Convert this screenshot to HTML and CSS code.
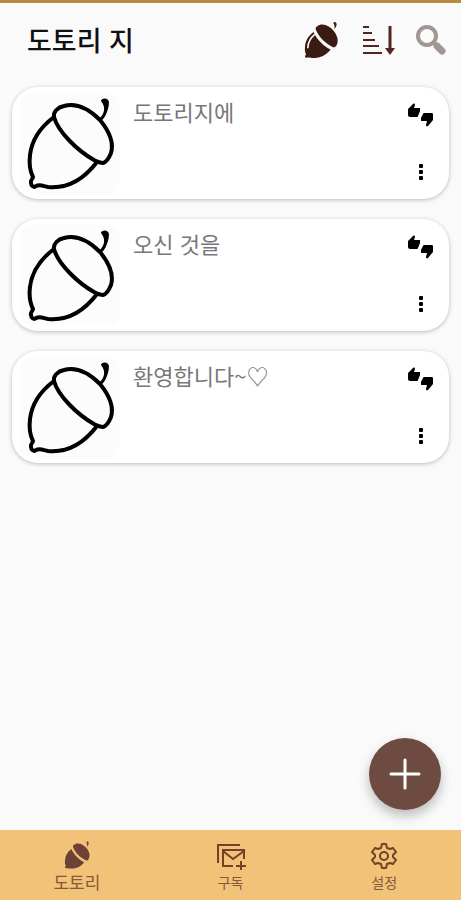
FILE: index.html
```html
<!DOCTYPE html>
<html lang="ko">
<head>
  <meta charset="UTF-8">
  <meta name="viewport" content="width=device-width, initial-scale=1.0">
  <title>도토리 지</title>
  <link rel="stylesheet" href="styles.css">
</head>
<body>
  <!-- shared icons -->
  <svg class="defs" aria-hidden="true">
    <symbol id="acorn" viewBox="0 0 100 100">
      <g fill="none" stroke="#000" stroke-width="4" stroke-linecap="round" stroke-linejoin="round">
        <path d="M34 24C22 33 12 45 10 62C9 70 10 78 13 84C13 86 10 87 11 90C11 93 14 95 16 93C20 91 23 93 28 94C49 96 64 86 77 69"/>
        <path d="M34 24C33 19 38 14 44 13C58 9 71 18 80 27C89 38 94 50 91 60C89 65 87 69 83 70C80 70 78 69 74 67C58 58 38 39 34 24Z"/>
        <path d="M80 27C85 23 86 18 86 13" stroke-width="3"/>
      </g>
      <path d="M81 8C81 5 88 4 89 9C89 15 87 20 83 25C85 18 85 13 81 8Z"/>
    </symbol>
    <symbol id="acorn-solid" viewBox="0 0 100 100">
      <path d="M31 30C17 41 10 55 10 68C9 76 10 81 13 86C8 90 10 96 16 94C22 93 27 96 34 95C51 95 65 86 74 74C57 66 41 50 31 30Z"/>
      <path d="M40 16C52 6 70 13 81 26C91 38 95 52 89 63C86 68 82 70 78 67C60 58 44 42 37 24C36 20 37 18 40 16Z"/>
      <path class="stem" d="M81 8C81 3 89 5 89 10C89 15 87 19 83 23C85 17 84 12 81 8Z"/>
    </symbol>
    <symbol id="thumbs" viewBox="0 0 28 26">
      <path d="M1 7L6 2C7 1 8 2 8 3L7 6H13V9L11 14C11 15 10 15 9 15H3C2 15 1 14 1 13Z"/>
      <path d="M26 18L21 24C20 25 19 24 19 23L20 19H14V16L16 12C16 11 17 11 18 11H25C26 11 26 12 26 13Z"/>
    </symbol>
    <symbol id="more" viewBox="0 0 24 24">
      <rect x="10" y="4" width="4" height="4" rx="1"/>
      <rect x="10" y="10" width="4" height="4" rx="1"/>
      <rect x="10" y="16" width="4" height="4" rx="1"/>
    </symbol>
  </svg>

  <div class="app">
    <header class="topbar">
      <h1>도토리 지</h1>
      <button class="icon-btn" type="button" aria-label="도토리">
        <svg class="acorn-icon" width="40" height="40" viewBox="0 0 100 100">
          <use href="#acorn-solid" width="100" height="100"/>
          <path class="shine" d="M33 37C22 46 18 57 17 69"/>
        </svg>
      </button>
      <button class="icon-btn" type="button" aria-label="정렬">
        <svg width="34" height="32" viewBox="0 0 34 32" fill="none" stroke="#54271e" stroke-width="2">
          <path d="M2 3H8M2 9H11M2 16H14M2 22H18M2 29H21"/>
          <path d="M29 2V27" stroke-width="3"/>
          <path d="M24 24H34L29 31Z" fill="#54271e" stroke="none"/>
        </svg>
      </button>
      <button class="icon-btn" type="button" aria-label="검색">
        <svg width="32" height="32" viewBox="0 0 32 32" fill="none">
          <circle cx="12" cy="12" r="9" stroke="#a19693" stroke-width="4"/>
          <path d="M18 18L21 21" stroke="#a19693" stroke-width="3"/>
          <path d="M22 22L27 27" stroke="#a19693" stroke-width="7" stroke-linecap="round"/>
        </svg>
      </button>
    </header>

    <main>
      <ul class="cards">
        <li class="card">
          <svg class="thumb"><use href="#acorn"/></svg>
          <p>도토리지에</p>
          <div class="actions">
            <button class="icon-btn" type="button" aria-label="평가"><svg width="28" height="26"><use href="#thumbs"/></svg></button>
            <button class="icon-btn" type="button" aria-label="더보기"><svg width="24" height="24"><use href="#more"/></svg></button>
          </div>
        </li>
        <li class="card">
          <svg class="thumb"><use href="#acorn"/></svg>
          <p>오신 것을</p>
          <div class="actions">
            <button class="icon-btn" type="button" aria-label="평가"><svg width="28" height="26"><use href="#thumbs"/></svg></button>
            <button class="icon-btn" type="button" aria-label="더보기"><svg width="24" height="24"><use href="#more"/></svg></button>
          </div>
        </li>
        <li class="card">
          <svg class="thumb"><use href="#acorn"/></svg>
          <p>환영합니다~♡</p>
          <div class="actions">
            <button class="icon-btn" type="button" aria-label="평가"><svg width="28" height="26"><use href="#thumbs"/></svg></button>
            <button class="icon-btn" type="button" aria-label="더보기"><svg width="24" height="24"><use href="#more"/></svg></button>
          </div>
        </li>
      </ul>
    </main>

    <button class="fab" type="button" aria-label="추가">
      <svg width="32" height="32" viewBox="0 0 32 32" stroke="#fff" stroke-width="3" stroke-linecap="round"><path d="M16 2V30M2 16H30"/></svg>
    </button>

    <nav class="tabs">
      <a href="#acorns" class="tab active">
        <svg class="acorn-tab" width="30" height="30"><use href="#acorn-solid"/></svg>
        <span>도토리</span>
      </a>
      <a href="#subs" class="tab">
        <svg width="30" height="30" viewBox="0 0 30 30" fill="none" stroke="#734128" stroke-width="2">
          <path d="M2 23V5H24"/>
          <path d="M17 26H7V10H28V19M7 11L17 19L28 11"/>
          <path d="M25 21V30M20 26H30"/>
        </svg>
        <span>구독</span>
      </a>
      <a href="#settings" class="tab">
        <svg width="30" height="30" viewBox="0 0 30 30" fill="none" stroke="#734128" stroke-width="2" stroke-linejoin="round">
          <path d="M13 4H17L18 8L21 9L24 8L27 12L24 15V17L27 20L24 24L21 23L18 24L17 28H13L12 24L9 23L6 24L3 20L6 17V15L3 12L6 8L9 9L12 8Z"/>
          <circle cx="15" cy="16" r="4"/>
        </svg>
        <span>설정</span>
      </a>
    </nav>
  </div>
</body>
</html>
```
FILE: styles.css
```css
* {
  box-sizing: border-box;
}
body {
  margin: 0;
  background-color: #fafafa;
  color: #111;
  font-family: "Noto Sans CJK KR", sans-serif;
}
.defs {
  position: absolute;
  width: 0;
  height: 0;
}
.app {
  display: flex;
  flex-direction: column;
  min-height: 100vh;
  border-top: 3px solid #b68b40;
}
main {
  flex: 1;
}
.icon-btn {
  display: flex;
  padding: 0;
  border: 0;
  background: none;
}

/* header */
.topbar {
  display: flex;
  align-items: center;
  gap: 20px;
  height: 72px;
  padding: 2px 14px 0 27px;
}
h1 {
  flex: 1;
  margin: 0;
  font-size: 27px;
  font-weight: 500;
  line-height: 40px;
}
.acorn-icon {
  fill: #3a1c15;
}
.shine {
  fill: none;
  stroke: #fafafa;
  stroke-width: 4;
  stroke-linecap: round;
}

/* cards */
.cards {
  display: flex;
  flex-direction: column;
  gap: 20px;
  margin: 0;
  padding: 12px;
  list-style: none;
}
.card {
  display: flex;
  gap: 13px;
  padding: 6px 14px 6px 8px;
  background-color: #fff;
  border-radius: 26px;
  box-shadow: 0 1px 4px rgba(0, 0, 0, 0.25);
}
.thumb {
  width: 100px;
  height: 100px;
  border-radius: 12px;
  background-color: #fcfcfc;
}
.card p {
  flex: 1;
  margin: 2px 0;
  color: #777;
  font-size: 22px;
  line-height: 32px;
}
.actions {
  display: flex;
  flex-direction: column;
  align-items: center;
  justify-content: space-between;
  padding: 9px 0;
}

/* add button */
.fab {
  position: fixed;
  right: 20px;
  bottom: 90px;
  display: flex;
  align-items: center;
  justify-content: center;
  width: 72px;
  height: 72px;
  padding: 0;
  border: 0;
  border-radius: 50%;
  background-color: #6d4b40;
  box-shadow: 0 6px 12px rgba(0, 0, 0, 0.25);
}

/* bottom tabs */
.tabs {
  position: sticky;
  bottom: 0;
  display: flex;
  height: 70px;
  background-color: #f1c278;
}
.tab {
  flex: 1;
  display: flex;
  flex-direction: column;
  align-items: center;
  padding-top: 10px;
  color: #85583a;
  font-size: 14px;
  line-height: 24px;
  text-decoration: none;
}
.tab.active {
  font-size: 17px;
}
.acorn-tab {
  fill: #6d4038;
}
```
